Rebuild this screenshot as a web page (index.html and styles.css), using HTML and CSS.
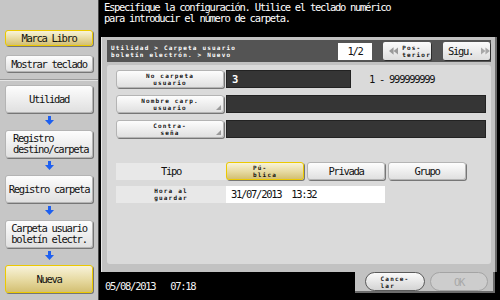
FILE: index.html
```html
<!DOCTYPE html>
<html lang="es">
<head>
    <meta charset="UTF-8">
    <meta name="viewport" content="width=device-width, initial-scale=1.0">
    <title>Carpeta usuario boletín electrón. - Nuevo</title>
    <link rel="stylesheet" href="styles.css">
</head>
<body>
    <div class="screen">
        <aside class="side">
            <div class="side-top">
                <div class="key key-yellow key-sm">Marca Libro</div>
                <div class="key key-sm">Mostrar teclado</div>
            </div>
            <div class="side-steps">
                <div class="key step">Utilidad</div>
                <div class="down"><svg width="9" height="10" viewBox="0 0 9 10"><rect x="3" y="0" width="3" height="4" fill="#1d5ff0"/><polygon points="0,4 9,4 4.5,9" fill="#1d5ff0"/></svg></div>
                <div class="key step step-left">Registro<br>destino/carpeta</div>
                <div class="down"><svg width="9" height="10" viewBox="0 0 9 10"><rect x="3" y="0" width="3" height="4" fill="#1d5ff0"/><polygon points="0,4 9,4 4.5,9" fill="#1d5ff0"/></svg></div>
                <div class="key step">Registro carpeta</div>
                <div class="down"><svg width="9" height="10" viewBox="0 0 9 10"><rect x="3" y="0" width="3" height="4" fill="#1d5ff0"/><polygon points="0,4 9,4 4.5,9" fill="#1d5ff0"/></svg></div>
                <div class="key step">Carpeta usuario<br>boletín electr.</div>
                <div class="down"><svg width="9" height="10" viewBox="0 0 9 10"><rect x="3" y="0" width="3" height="4" fill="#1d5ff0"/><polygon points="0,4 9,4 4.5,9" fill="#1d5ff0"/></svg></div>
                <div class="key key-yellow step">Nueva</div>
            </div>
        </aside>

        <main class="main">
            <div class="msg">Especifique la configuración. Utilice el teclado numérico<br>para introducir el número de carpeta.</div>

            <div class="panel">
                <div class="crumb">
                    <div class="tiny crumb-text">Utilidad &gt; Carpeta usuario<br>boletín electrón. &gt; Nuevo</div>
                    <div class="page">1/2</div>
                    <div class="nav nav-prev">
                        <svg width="10" height="8" viewBox="0 0 10 8"><polygon points="5,0 5,8 0,4" fill="#9a9a9a"/><polygon points="10,0 10,8 5,4" fill="#9a9a9a"/></svg>
                        <span class="tiny">Pos-<br>terior</span>
                    </div>
                    <div class="nav nav-next">
                        <span>Sigu.</span>
                        <svg width="10" height="8" viewBox="0 0 10 8"><polygon points="0,0 0,8 5,4" fill="#a8a8a8"/><polygon points="5,0 5,8 10,4" fill="#a8a8a8"/></svg>
                    </div>
                </div>

                <div class="content">
                    <div class="row">
                        <div class="key field-key tiny">No carpeta<br>usuario</div>
                        <div class="input input-short">3</div>
                        <div class="range">1 - 999999999</div>
                    </div>
                    <div class="row">
                        <div class="key field-key tiny has-more">Nombre carp.<br>usuario</div>
                        <div class="input input-long"></div>
                    </div>
                    <div class="row">
                        <div class="key field-key tiny has-more">Contra-<br>seña</div>
                        <div class="input input-long"></div>
                    </div>

                    <div class="row row-type">
                        <div class="info-label">Tipo</div>
                        <div class="key key-yellow choice"><span class="tiny">Pú-<br>blica</span></div>
                        <div class="key choice">Privada</div>
                        <div class="key choice">Grupo</div>
                    </div>
                    <div class="row row-time">
                        <div class="info-label tiny">Hora al<br>guardar</div>
                        <div class="info-value">31/07/2013&nbsp;&nbsp;13:32</div>
                    </div>
                </div>
            </div>

            <div class="foot">
                <div class="clock">05/08/2013&nbsp;&nbsp;&nbsp;07:18</div>
                <div class="actions">
                    <div class="pill"><span class="tiny">Cance-<br>lar</span></div>
                    <div class="pill pill-off">OK</div>
                </div>
            </div>
        </main>
    </div>
</body>
</html>
```

FILE: styles.css
```css
* {
    box-sizing: border-box;
}
body {
    margin: 0;
    background: #000;
    font-family: "DejaVu Sans Mono", "Liberation Mono", monospace;
    font-size: 10.5px;
    letter-spacing: -1.3px;
    color: #111;
}
.screen {
    display: flex;
    width: 500px;
    height: 300px;
    overflow: hidden;
}
.tiny {
    font-size: 6px;
    font-weight: bold;
    line-height: 7px;
    letter-spacing: 1.2px;
}

/* sidebar */
.side {
    width: 99px;
    background: #c6c6c6;
    border-right: 1px solid #4a4a4a;
}
.side-top {
    padding: 30px 5px 7px;
    border-bottom: 1px solid #999;
    box-shadow: 0 1px 0 #e4e4e4;
}
.side-steps {
    padding: 5px 5px 0;
}
.key {
    display: flex;
    align-items: center;
    justify-content: center;
    text-align: center;
    background: linear-gradient(#fdfdfd, #e0e0e0);
    border: 1px solid #b4b4b4;
    border-radius: 3px;
    box-shadow: 1px 1px 0 #767676;
}
.key-yellow {
    background: linear-gradient(#f8f3da, #e6d9a0 55%, #d3bf72);
    border-color: #ecc900;
}
.key-sm {
    width: 88px;
    height: 16px;
}
.key-sm + .key-sm {
    margin-top: 9px;
    height: 17px;
}
.step {
    width: 88px;
    height: 28px;
    line-height: 11px;
}
.step-left {
    justify-content: flex-start;
    text-align: left;
    padding-left: 7px;
}
.down {
    height: 17px;
    display: flex;
    align-items: center;
    justify-content: center;
    padding-bottom: 2px;
}

/* main */
.main {
    flex: 1;
    display: flex;
    flex-direction: column;
}
.msg {
    height: 37px;
    padding: 2px 5px 0;
    color: #fff;
    line-height: 11px;
}
.panel {
    height: 235px;
    margin: 0 3px 0 2px;
    padding: 3px 4px 8px 5px;
    background: #c2c2c2;
    border-left: 1px solid #e8e8e8;
    border-right: 2px solid #6c6c6c;
}
.crumb {
    display: flex;
    align-items: center;
    height: 22px;
    padding: 0 1px 0 4px;
    background: #545454;
}
.crumb-text {
    flex: 1;
    color: #fff;
}
.page {
    width: 34px;
    height: 17px;
    background: #fff;
    display: flex;
    align-items: center;
    justify-content: center;
}
.nav {
    height: 18px;
    display: flex;
    align-items: center;
    gap: 4px;
    background: linear-gradient(#fbfbfb, #dedede);
    border-radius: 2px;
    box-shadow: 1px 1px 0 #2c2c2c;
}
.nav-prev {
    width: 48px;
    margin-left: 11px;
    padding-left: 6px;
}
.nav-next {
    width: 47px;
    margin-left: 12px;
    padding-left: 5px;
    gap: 8px;
}
.content {
    height: 199px;
    margin-top: 3px;
    padding: 5px 0 0 9px;
    background: #dadada;
    border-radius: 3px;
}
.row {
    display: flex;
    align-items: center;
    height: 18px;
    margin-bottom: 7px;
}
.field-key {
    position: relative;
    width: 108px;
    height: 18px;
    margin-right: 2px;
}
.has-more::after {
    content: "";
    position: absolute;
    right: 2px;
    bottom: 2px;
    border-left: 5px solid transparent;
    border-bottom: 5px solid #9a9a9a;
}
.input {
    height: 18px;
    background: #353535;
    border: 1px solid #222;
    color: #fff;
    font-weight: bold;
    padding-left: 5px;
    line-height: 16px;
}
.input-short {
    width: 125px;
}
.input-long {
    width: 260px;
}
.range {
    margin-left: 18px;
}
.row-type {
    margin-top: 24px;
    margin-bottom: 5px;
}
.info-label {
    width: 110px;
    height: 17px;
    background: #e8e8e8;
    display: flex;
    align-items: center;
    justify-content: center;
    text-align: center;
}
.choice {
    width: 78px;
    height: 18px;
    margin-right: 3px;
    text-align: left;
}
.info-value {
    width: 159px;
    height: 17px;
    background: #fff;
    padding-left: 5px;
    line-height: 17px;
}

/* bottom */
.foot {
    flex: 1;
    display: flex;
}
.clock {
    flex: 1;
    padding: 8px 0 0 6px;
    color: #f4f4f4;
}
.actions {
    width: 140px;
    height: 21px;
    margin-right: 5px;
    display: flex;
    align-items: center;
    gap: 5px;
    padding-left: 10px;
    background: #c2c2c2;
    border-right: 2px solid #6c6c6c;
    border-bottom: 2px solid #6c6c6c;
}
.pill {
    width: 60px;
    height: 19px;
    border-radius: 10px;
    display: flex;
    align-items: center;
    justify-content: center;
    background: linear-gradient(#fafafa, #d4d4d4);
    border: 1px solid #5a5a5a;
    text-align: left;
}
.pill-off {
    width: 58px;
    background: #cdcdcd;
    border-color: #a4a4a4;
    color: #a8a8a8;
}
```
